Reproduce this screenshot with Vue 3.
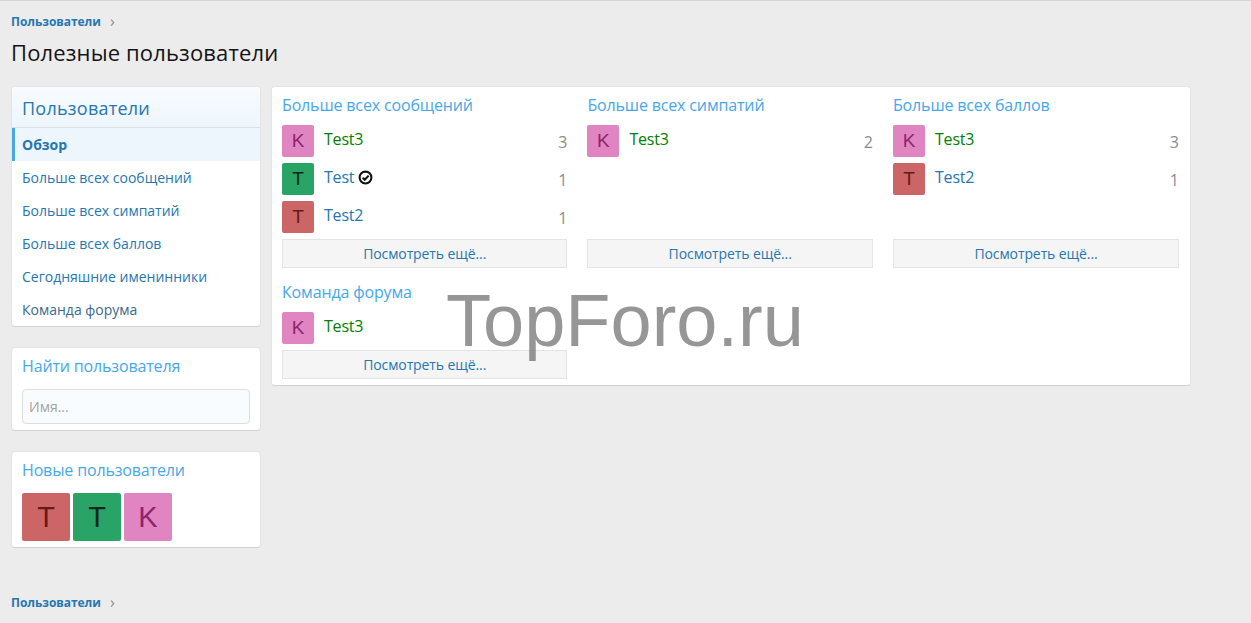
<template>
  <div class="page">
    <div class="inner">
      <nav class="crumbs"><a>Пользователи</a><span class="chev">›</span></nav>
      <h1>Полезные пользователи</h1>

      <div class="columns">
        <aside class="side">
          <div class="block nav-block">
            <h2 class="nav-title">Пользователи</h2>
            <a
              v-for="(item, i) in navItems"
              :key="item"
              class="nav-item"
              :class="{ active: i === 0 }"
            >{{ item }}</a>
          </div>

          <div class="block side-block find-block">
            <h3 class="minor">Найти пользователя</h3>
            <div class="fake-input">Имя...</div>
          </div>

          <div class="block side-block new-block">
            <h3 class="minor">Новые пользователи</h3>
            <div class="new-row">
              <span v-for="(u, i) in newUsers" :key="i" class="avatar big" :class="u.cls">{{ u.letter }}</span>
            </div>
          </div>
        </aside>

        <main class="block main">
          <section v-for="g in groups" :key="g.title" class="group">
            <h3 class="minor">{{ g.title }}</h3>
            <ul class="rows" :style="{ minHeight: g.minHeight }">
              <li v-for="r in g.rows" :key="r.name" class="row">
                <span class="avatar" :class="r.cls">{{ r.letter }}</span>
                <a class="name" :class="{ staff: r.staff }"><span>{{ r.name }}</span><svg v-if="r.check" class="check" viewBox="0 0 16 16" width="15" height="15">
                    <circle cx="8" cy="8" r="6.3" fill="none" stroke="#111" stroke-width="2.2" />
                    <path d="M5 8.2l2.2 2.2L11.4 6" fill="none" stroke="#111" stroke-width="2.2" />
                  </svg></a>
                <span class="count">{{ r.count }}</span>
              </li>
            </ul>
            <a class="more">Посмотреть ещё...</a>
          </section>
        </main>
      </div>

      <nav class="crumbs bottom"><a>Пользователи</a><span class="chev">›</span></nav>
    </div>
    <div class="watermark">TopForo.ru</div>
  </div>
</template>

<script setup>
const navItems = [
  'Обзор',
  'Больше всех сообщений',
  'Больше всех симпатий',
  'Больше всех баллов',
  'Сегодняшние именинники',
  'Команда форума'
]

const k = { letter: 'K', cls: 'pink', name: 'Test3', staff: true }
const t = { letter: 'T', cls: 'green', name: 'Test', check: true }
const t2 = { letter: 'T', cls: 'red', name: 'Test2' }

const newUsers = [t2, t, k]

const groups = [
  {
    title: 'Больше всех сообщений',
    minHeight: '108px',
    rows: [{ ...k, count: 3 }, { ...t, count: 1 }, { ...t2, count: 1 }]
  },
  { title: 'Больше всех симпатий', minHeight: '108px', rows: [{ ...k, count: 2 }] },
  { title: 'Больше всех баллов', minHeight: '108px', rows: [{ ...k, count: 3 }, { ...t2, count: 1 }] },
  { title: 'Команда форума', minHeight: '32px', rows: [{ ...k }] }
]
</script>

<style>
html, body { background: #ececec; }
</style>

<style scoped>
.page {
  position: relative;
  height: 622px;
  border-top: 1px solid #d4d4d4;
  font-family: "Open Sans", "Noto Sans", sans-serif;
  font-size: 14px;
  color: #141414;
  overflow: hidden;
}
.inner { width: 1180px; padding-left: 11px; }
a { color: #2577b1; text-decoration: none; }
h1, h2, h3, ul { margin: 0; padding: 0; font-weight: 400; list-style: none; }

.crumbs { height: 20px; padding-top: 10px; display: flex; align-items: center; font-size: 12px; font-weight: 700; letter-spacing: -0.05px; }
.crumbs.bottom { padding-top: 0; margin-top: 44px; }
.chev { margin-left: 9px; color: #8c8c8c; font-weight: 400; font-size: 16px; }
h1 { margin-top: 7px; height: 48px; font-size: 22px; line-height: 28px; letter-spacing: 0.15px; color: #141414; }

.columns { display: flex; align-items: flex-start; gap: 10px; }
.side { width: 250px; display: flex; flex-direction: column; gap: 20px; }
.block {
  background: #fff;
  border: 1px solid #e4e4e4;
  border-bottom-color: #d0d0d0;
  border-radius: 4px;
}

.nav-block { overflow: hidden; height: 241px; box-sizing: border-box; }
.nav-title {
  height: 40px;
  padding-left: 10px;
  font-size: 18px;
  line-height: 43px;
  color: #2577b1;
  background: linear-gradient(#f8fbfe, #edf6fd);
  border-bottom: 1px solid #dfdfdf;
  letter-spacing: 0.25px;
}
.nav-item { display: block; height: 33px; line-height: 33px; padding-left: 10px; font-size: 14px; }
.nav-item.active {
  padding-left: 7px;
  border-left: 3px solid #47a7eb;
  background: #edf6fd;
  font-weight: 700;
}
.nav-item:last-child { color: #3b6a8c; }

.minor { font-size: 16px; line-height: 18px; height: 18px; color: #47a7eb; letter-spacing: -0.15px; }

.side-block { padding: 9px 10px 6px; box-sizing: border-box; }
.find-block { height: 84px; }
.new-block { height: 97px; }
.fake-input {
  margin-top: 14px;
  height: 33px;
  line-height: 33px;
  padding-left: 6px;
  font-size: 14px;
  color: #a3a3a3;
  background: #f9fcff;
  border: 1px solid #dfdfdf;
  border-radius: 4px;
}
.new-row { display: flex; gap: 3px; margin-top: 14px; }

.main {
  width: 920px;
  height: 300px;
  box-sizing: border-box;
  padding: 9px 11px 0 10px;
  display: grid;
  grid-template-columns: 285.4px 285.6px 286px;
  column-gap: 20px;
  align-content: start;
  row-gap: 15px;
}
.group .minor { margin-bottom: 11px; }
.rows { display: flex; flex-direction: column; gap: 6px; margin-bottom: 6px; }
.row { display: flex; height: 32px; }
.avatar {
  flex: none;
  width: 32px;
  height: 32px;
  border-radius: 2px;
  text-align: center;
  font-family: "Liberation Sans", sans-serif;
  font-size: 19px;
  line-height: 32px;
}
.avatar.big { width: 48px; height: 48px; font-size: 29px; line-height: 48px; }
.pink { background: #e085c2; color: #8f246b; }
.green { background: #29a366; color: #0a2919; }
.red { background: #cc6666; color: #661a1a; }
.name { margin-left: 10px; font-size: 16px; line-height: 29px; letter-spacing: -0.2px; height: 29px; display: flex; align-items: center; gap: 4px; }
.name.staff { color: #008000; }
.count { margin-left: auto; font-size: 16px; line-height: 34px; color: #8c8c8c; }
.more {
  display: block;
  height: 27px;
  line-height: 27px;
  text-align: center;
  font-size: 14px;
  letter-spacing: -0.1px;
  background: #f5f5f5;
  border: 1px solid #e4e4e4;
}

.watermark {
  position: absolute;
  left: 446px;
  top: 277px;
  font-family: "Liberation Sans", sans-serif;
  font-size: 74px;
  line-height: 86px;
  color: rgba(100, 100, 100, 0.68);
  pointer-events: none;
}
</style>
